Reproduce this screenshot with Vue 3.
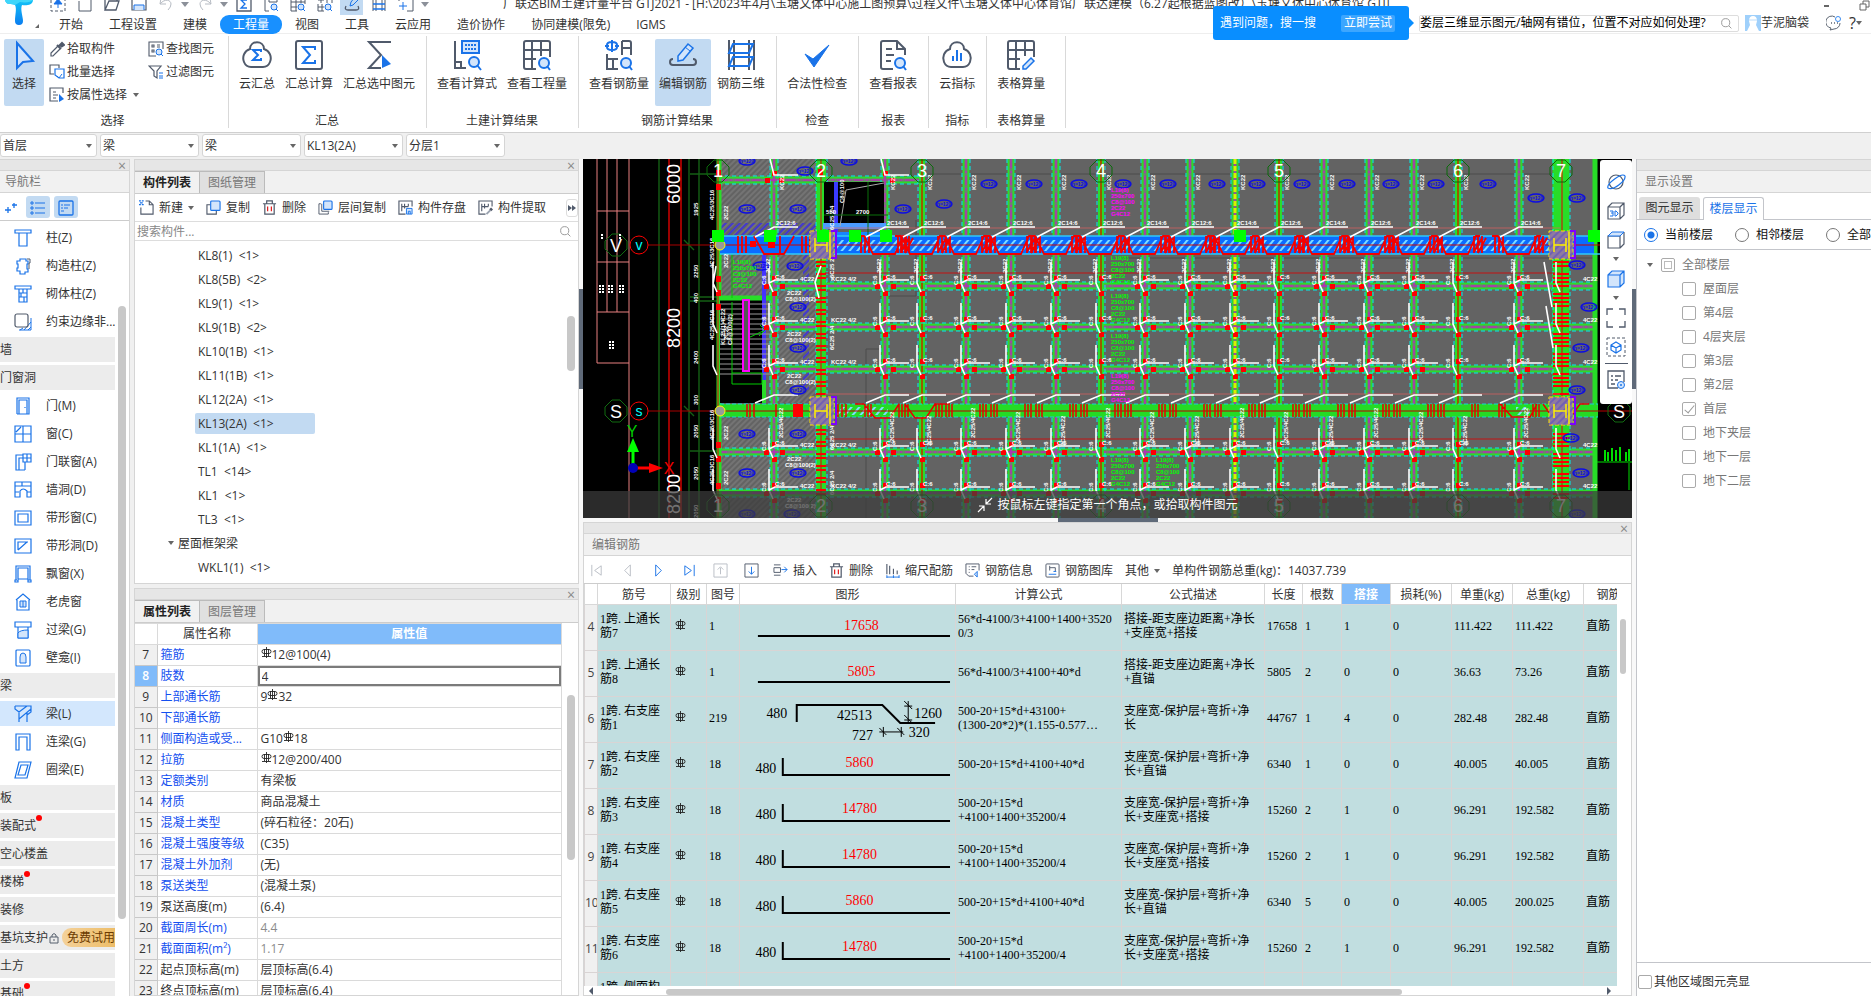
<template>
  <div class="app">
    <!-- TOP -->
    <header class="top">
      <svg class="logo" viewBox="0 0 34 26">
        <defs>
          <linearGradient id="logoFill" x1="0" y1="0" x2="0" y2="1">
            <stop offset="0" stop-color="#12c3f7" />
            <stop offset="1" stop-color="#0b7df0" />
          </linearGradient>
        </defs>
        <path d="M5 0H33C33 5 26 6 22 5C20 9 23 17 23 21A4 4 0 0 1 15 21C15 15 17 9 15 5C12 3 6 6 5 0Z" fill="url(#logoFill)" />
        <path d="M5 0H33C31 2 26 3 20 2L15 5C12 3 6 6 5 0Z" fill="#3fd6fa" />
      </svg>
      <div class="top-main">
        <div class="title-row">
          <div class="quick">
            <button v-for="(q, i) in quick" :key="i" :class="['quick-btn', { active: q === 'edit', caret: q === 'down' }]" :aria-label="q">
              <svg viewBox="0 0 16 16" v-html="icons[q]"></svg>
            </button>
          </div>
          <span class="app-title">{{ title }}</span>
          <div class="win">
            <svg viewBox="0 0 50 12"><path d="M3 6H8" stroke="#666" stroke-width="2" /><path d="M42 4V1H48V7H45M39 4H45V10H39Z" fill="none" stroke="#666" /></svg>
          </div>
        </div>
        <nav class="menu">
          <i class="corner"></i>
          <button v-for="m in menus" :key="m" :class="{ on: m === '工程量' }">{{ m }}</button>
        </nav>
      </div>
      <div class="help">
        <div class="tip">
          <span>遇到问题，搜一搜</span>
          <button>立即尝试</button>
        </div>
        <div class="ask">
          <input type="text" aria-label="搜索问题" value="娄层三维显示图元/轴网有错位，位置不对应如何处理?" />
          <svg viewBox="0 0 16 16" v-html="icons.search"></svg>
        </div>
        <svg class="avatar" viewBox="0 0 16 16"><rect width="16" height="16" fill="#9fd0fb" /><path d="M4 6Q4 1 8 1T12 6L11 10L14 16H2L5 10Z" fill="#fff" /><path d="M4 5H12" stroke="#b9dcfb" /></svg>
        <span class="user">芋泥脑袋</span>
        <svg class="chat" viewBox="0 0 16 16"><path d="M9 2A6 6 0 1 0 5 13L4 15L8 14A6 6 0 0 0 14 8" fill="none" stroke="#5d6673" /><circle cx="12" cy="4" r="2.5" fill="none" stroke="#3b8cf0" /><path d="M5 8h1M8 8h1M11 8h1" stroke="#5d6673" stroke-width="1.5" /></svg>
        <button class="question">?<i class="tri"></i></button>
      </div>
    </header>

    <!-- RIBBON -->
    <section class="ribbon">
      <div class="group pick">
        <div class="group-body">
          <button class="big active">
            <svg viewBox="0 0 32 32" v-html="icons.cursor"></svg>
            <span>选择</span>
          </button>
          <div class="smalls">
            <button v-for="s in smallLeft" :key="s.label"><svg viewBox="0 0 16 16" v-html="icons[s.icon]"></svg>{{ s.label }}<i v-if="s.drop" class="tri"></i></button>
          </div>
          <div class="smalls second">
            <button v-for="s in smallRight" :key="s.label"><svg viewBox="0 0 16 16" v-html="icons[s.icon]"></svg>{{ s.label }}</button>
          </div>
        </div>
        <div class="group-name">选择</div>
      </div>
      <div v-for="g in groups" :key="g.name" class="group">
        <div class="group-body">
          <button v-for="b in g.items" :key="b.label" :class="['big', { active: b.active }]">
            <svg viewBox="0 0 32 32" v-html="icons[b.icon]"></svg>
            <span>{{ b.label }}</span>
          </button>
        </div>
        <div class="group-name">{{ g.name }}</div>
      </div>
    </section>

    <!-- SELECTORS -->
    <section class="selectors">
      <div v-for="(s, i) in selectors" :key="i" class="select-box">
        <select :aria-label="'选择' + (i + 1)"><option>{{ s }}</option></select>
        <i class="tri"></i>
      </div>
    </section>

    <main class="body">
      <!-- NAVIGATION -->
      <aside class="nav">
        <div class="strip"><button aria-label="关闭导航栏">×</button></div>
        <h2 class="head">导航栏</h2>
        <div class="nav-tools">
          <button aria-label="展开"><svg viewBox="0 0 16 16" v-html="icons.plus2"></svg></button>
          <button class="on" aria-label="列表"><svg viewBox="0 0 16 16" v-html="icons.list"></svg></button>
          <button class="on" aria-label="卡片"><svg viewBox="0 0 16 16" v-html="icons.card"></svg></button>
        </div>
        <div class="nav-scroll">
          <div class="nav-list">
            <button v-for="n in navItems" :key="n.label" :class="[n.icon ? 'nav-item' : 'nav-cat', { on: n.on }]">
              <svg v-if="n.icon" viewBox="0 0 18 18" v-html="icons[n.icon]"></svg>
              <span :class="{ dot: n.dot }">{{ n.label }}</span>
              <template v-if="n.trial">
                <svg class="lock" viewBox="0 0 12 12"><path d="M2 5H10V11H2ZM4 5V3Q6 0 8 3V5M6 7V9" fill="none" stroke="#555f6d" /></svg>
                <em>免费试用</em>
              </template>
            </button>
          </div>
          <div class="bar nav-bar"></div>
        </div>
      </aside>

      <!-- COMPONENT AND PROPERTY LISTS -->
      <div class="lists">
        <section class="panel components">
          <div class="strip"><button aria-label="关闭构件列表">×</button></div>
          <div class="tabs"><button class="on">构件列表</button><button>图纸管理</button></div>
          <div class="tools">
            <button v-for="t in compTools" :key="t.label"><svg viewBox="0 0 16 16" v-html="icons[t.icon]"></svg>{{ t.label }}<i v-if="t.drop" class="tri"></i></button>
            <button class="more" aria-label="更多"><i></i><i></i></button>
          </div>
          <div class="search">
            <input type="text" aria-label="搜索构件" placeholder="搜索构件..." />
            <svg viewBox="0 0 16 16" v-html="icons.search"></svg>
          </div>
          <div class="comp-scroll">
            <ul>
              <li v-for="c in components" :key="c" :class="{ parent: c === '屋面框架梁', on: c === 'KL13(2A)  <1>' }">
                <i v-if="c === '屋面框架梁'" class="tri"></i><span>{{ c }}</span>
              </li>
            </ul>
            <div class="bar comp-bar"></div>
          </div>
        </section>

        <section class="panel props">
          <div class="strip"><button aria-label="关闭属性列表">×</button></div>
          <div class="tabs"><button class="on">属性列表</button><button>图层管理</button></div>
          <div class="props-scroll">
            <table>
              <colgroup><col class="c-no" /><col class="c-name" /><col /></colgroup>
              <thead><tr><th></th><th>属性名称</th><th class="hot">属性值</th></tr></thead>
              <tbody>
                <tr v-for="(p, i) in props" :key="p[0]" :class="{ cur: i === 1 }">
                  <td class="no">{{ i + 7 }}</td>
                  <td :class="['name', { plain: p[2] === 'plain' }]">{{ p[0] }}</td>
                  <td :class="['val', { faint: p[2] === 'faint' }]">
                    <input v-if="i === 1" type="text" :value="p[1]" aria-label="肢数" />
                    <template v-else v-for="(part, k) in p[1].split('#')" :key="k"><svg v-if="k" class="rebar" viewBox="0 0 11 11" v-html="icons.rebar"></svg>{{ part }}</template>
                  </td>
                </tr>
              </tbody>
            </table>
            <div class="bar props-bar"></div>
          </div>
        </section>
      </div>

      <div class="split"><i></i></div>

      <!-- DRAWING AND REBAR TABLE -->
      <div class="center">
        <div class="canvas">
          <svg class="cad" viewBox="583 159 1049 359" preserveAspectRatio="xMidYMid slice">
            <defs>
              <pattern id="hatch" width="4" height="4" patternUnits="userSpaceOnUse" patternTransform="rotate(45)"><path d="M1 0V4" stroke="#858585" /></pattern>
              <pattern id="purple" width="5" height="5" patternUnits="userSpaceOnUse" patternTransform="rotate(45)"><path d="M1 0V5" stroke="#4338d0" stroke-width="2" /></pattern>
              <pattern id="sky" width="6" height="6" patternUnits="userSpaceOnUse" patternTransform="rotate(40)"><path d="M2 0V6" stroke="#7fdcff" stroke-width="2" /></pattern>
            </defs>
            <rect x="583" y="159" width="1049" height="359" fill="#000" />
            <rect x="718" y="159" width="878" height="359" fill="#636363" />
            <rect x="720" y="159" width="100" height="76" fill="url(#hatch)" />
            <rect x="720" y="254" width="100" height="46" fill="url(#hatch)" />
            <rect x="772" y="300" width="48" height="103" fill="url(#hatch)" />
            <rect x="720" y="418" width="100" height="100" fill="url(#hatch)" />
            <rect x="720" y="223" width="100" height="12" fill="url(#purple)" />
            <rect x="803" y="240" width="6" height="150" fill="url(#purple)" />
            <path d="M922 174H1560M916 220V296H880M866 349V518M866 349H890M1120 258H1595" fill="none" stroke="#4c4c4c" stroke-width="1" />

            <!-- left frame and dimensions -->
            <path d="M597 159V363H629M607 159V312M617 159V312M597 211H629M597 262H629M597 312H629M629 159V518" fill="none" stroke="#e98080" />
            <path d="M659 159V518M689 159V518M699 159V518M690 174H718M690 297H718M690 301H718M690 451H718M684 240L694 250M684 406L694 416" fill="none" stroke="#145f14" stroke-width="1.4" />
            <path d="M669 159V518M681 159V518" stroke="#d00000" stroke-width="1.5" />
            <path d="M648 245H718M648 411H718" stroke="#a80000" />
            <path :d="bubble(616, 245) + bubble(616, 411)" fill="none" stroke="#116c11" />
            <text v-for="t in dims" :key="t.y" class="cad-dim" :transform="`translate(680 ${t.y}) rotate(-90)`">{{ t.v }}</text>
            <text v-for="t in smallDims" :key="t.y" class="tiny" :transform="`translate(698 ${t.y}) rotate(-90)`">{{ t.v }}</text>
            <text x="616" y="252" class="cad-axis">V</text>
            <text x="616" y="418" class="cad-axis">S</text>
            <g fill="none" stroke="#f00"><circle cx="639" cy="245" r="9" /><circle cx="639" cy="411" r="9" /></g>
            <text x="639" y="250" class="cad-sub">v</text>
            <text x="639" y="416" class="cad-sub">s</text>
            <path d="M600 285V293M603 285V293M609 285V293M612 285V293M620 285V293M623 285V293M610 341V349M613 341V349M602 234V240M620 234V240" stroke="#fff" stroke-width="2" stroke-dasharray="2 1" />

            <!-- secondary beams -->
            <path :d="minorLines" stroke="#2bdc2b" stroke-width="7" />
            <path :d="minorLines" stroke="#777" stroke-width="3" />
            <path :d="minorLines" stroke="#d012d0" stroke-width="1" stroke-dasharray="9 3 2 3" />
            <path :d="axisLines" stroke="#2bdc2b" stroke-width="6" />
            <path :d="axisLines" stroke="#9a5a00" stroke-width="2" />
            <path :d="edgeLines" stroke="#00f0f0" stroke-width="1" stroke-dasharray="4 3" />
            <path d="M1235 159V518" stroke="#d8f000" stroke-width="3" stroke-dasharray="5 2" />

            <!-- perimeter and main beams -->
            <path d="M719 159V518M1595 159V518" stroke="#28dd28" stroke-width="5" />
            <path d="M821 159V518" stroke="#28dd28" stroke-width="10" />
            <path d="M1561 159V518" stroke="#28dd28" stroke-width="17" />
            <path d="M816 159V518M827 159V518M1553 159V518M1570 159V518" stroke="#00f0f0" stroke-dasharray="4 3" />
            <path d="M821 159V518M1562 159V518M718 159V518" stroke="#e00000" />
            <path :d="axisTicks" stroke="#f00" stroke-width="2" />
            <rect x="824" y="182" width="60" height="44" fill="#000" />
            <path d="M836 182V235" stroke="#3a3aff" stroke-width="4" />
            <path d="M823 226H886" stroke="#4b9bff" stroke-width="6" />
            <path d="M823 237H886" stroke="#1786ff" stroke-width="10" />
            <path d="M840 226L846 190L884 183" fill="none" stroke="#aaa" />
            <path d="M824 215H888M868 182V235" stroke="#0b700b" />
            <rect x="720" y="300" width="43" height="103" fill="#000" />
            <path d="M719 298H772" stroke="#28dd28" stroke-width="5" />
            <path d="M764 255V382" stroke="#4433ff" stroke-width="4" />
            <path d="M764 380V403" stroke="#28dd28" stroke-width="4" />
            <path :d="stairs" stroke="#999" />
            <path d="M732 302V384H762M732 373H762V384M732 254V298M748 338L763 331M760 325L765 330L759 336" fill="none" stroke="#0c0" />
            <rect x="743" y="300" width="6" height="71" fill="#555" stroke="#f0f" stroke-width="2" />

            <rect x="720" y="236" width="874" height="18" fill="#0b6cff" />
            <path d="M720 236H1600M720 254H1600" stroke="#30c9f7" stroke-width="1.5" />
            <rect x="836" y="240" width="720" height="11" fill="url(#sky)" />
            <path d="M720 245H1600" stroke="#c00" />
            <rect x="720" y="404" width="878" height="13" fill="#25da25" />
            <path d="M720 404H1598M720 417H1598" stroke="#16d5d5" stroke-dasharray="4 2" />
            <rect x="836" y="407" width="52" height="8" fill="url(#sky)" />
            <rect x="1516" y="407" width="14" height="8" fill="url(#sky)" />
            <path d="M720 411H1632" stroke="#b00" />
            <path d="M825 273H1560M825 439H1560" stroke="#c51212" />
            <path d="M825 228H1560M825 394H1560" stroke="#e06060" stroke-width=".7" />

            <path :d="stirrups" fill="none" stroke="#f40000" stroke-width="1.8" />
            <path :d="lowStirrups" fill="none" stroke="#e80000" stroke-width="1.5" />
            <path :d="nodes" fill="#f00" />
            <path :d="leaders" fill="none" stroke="#fff" stroke-width="1.6" />

            <g v-for="e in ellipses" :key="e.join()">
              <ellipse :cx="e[0]" :cy="e[1]" rx="8" ry="4" fill="none" stroke="#0c0ce6" stroke-width="1.4" />
              <text :x="e[0]" :y="e[1] + 2" class="mark">h=120</text>
            </g>

            <g class="tiny">
              <text v-for="(t, i) in tinyText" :key="i" :transform="`translate(${t.x} ${t.y}) rotate(${t.r})`">{{ t.v }}</text>
            </g>
            <g class="note">
              <text v-for="(t, i) in notes" :key="i" :x="t.x" :y="t.y" :fill="t.c">{{ t.v }}</text>
            </g>

            <!-- columns -->
            <g v-for="c in columns" :key="c.join()">
              <rect :x="c[0] - 11" :y="c[1] - 14" width="24" height="28" fill="#8f7aa0" stroke="#ffe600" stroke-dasharray="4 2" />
              <rect :x="c[0] - 11" :y="c[1] - 14" width="24" height="28" fill="url(#purple)" opacity=".4" />
              <path :d="`M${c[0] + 10} ${c[1] - 14}h5v27h-5`" fill="none" stroke="#7d00ff" stroke-width="2" />
              <path :d="`M${c[0] - 6} ${c[1] - 7}v14M${c[0] + 6} ${c[1] - 7}v14M${c[0] - 6} ${c[1]}h12M${c[0] + 9} ${c[1] - 13}v26`" stroke="#fff000" stroke-width="1.5" />
            </g>
            <circle cx="720" cy="245" r="5" fill="#999" stroke="#ff0" />
            <circle cx="720" cy="411" r="5" fill="#999" stroke="#ff0" />
            <rect v-for="x in grips" :key="x" :x="x - 6" y="230" width="12" height="12" fill="#00ff00" />

            <!-- grid bubbles -->
            <g v-for="(x, i) in bubbles" :key="x">
              <path :d="bubble(x, 171) + bubble(x, 506)" fill="none" stroke="#0b6b0b" />
              <text :x="x" y="177" class="cad-axis">{{ i + 1 }}</text>
              <text :x="x" y="512" class="cad-axis">{{ i + 1 }}</text>
            </g>

            <path :d="bubble(1619, 411)" fill="none" stroke="#116c11" />
            <text x="1619" y="418" class="cad-axis">S</text>
            <path d="M1597 462H1632M1629 463V490" stroke="#0d0" />
            <path d="M1605 450V461M1608 452V461M1612 448V461M1616 450V461M1620 447V461M1626 452V461M1629 449V461" stroke="#0d0" stroke-width="2" />

            <path d="M633 468V450" stroke="#0f0" stroke-width="3" /><path d="M633 438L627 452H639Z" fill="#0f0" />
            <path d="M633 468H650" stroke="#f00" stroke-width="3" /><path d="M663 468L649 463V473Z" fill="#f00" />
            <circle cx="633" cy="468" r="5" fill="#0000b8" />
            <text x="632" y="437" class="ucs" fill="#0c0">Y</text>
            <text x="669" y="474" class="ucs" fill="#e00">X</text>
          </svg>
          <div class="hint">
            <svg viewBox="0 0 16 16"><path d="M1 15L7 9M2 9H7V14M15 1L9 7M9 2V7H14" fill="none" stroke="#fff" stroke-width="1.2" /></svg>
            按鼠标左键指定第一个角点，或拾取构件图元
          </div>
          <div class="view-tools">
            <template v-for="(v, i) in viewTools" :key="i">
              <i v-if="v === 'tri'" class="tri"></i>
              <hr v-else-if="v === 'line'" />
              <button v-else :aria-label="v"><svg viewBox="0 0 20 20" v-html="icons[v]"></svg></button>
            </template>
          </div>
        </div>

        <div class="hsplit"><i></i></div>

        <section class="panel rebar-panel">
          <div class="strip"><button aria-label="关闭编辑钢筋">×</button></div>
          <h2 class="head">编辑钢筋</h2>
          <div class="rebar-tools">
            <button v-for="t in steps" :key="t" class="step" :aria-label="t"><svg viewBox="0 0 16 16" v-html="icons[t]"></svg></button>
            <button v-for="t in rebarTools" :key="t.label"><svg viewBox="0 0 16 16" v-html="icons[t.icon]"></svg>{{ t.label }}</button>
            <button>其他<i class="tri"></i></button>
            <span class="weight">单构件钢筋总重(kg)：14037.739</span>
          </div>
          <div class="grid-area">
            <div class="grid-scroll">
              <table>
                <colgroup><col v-for="(w, i) in widths" :key="i" :style="{ width: w + 'px' }" /></colgroup>
                <thead>
                  <tr><th v-for="h in heads" :key="h" :class="{ hot: h === '搭接' }">{{ h }}</th></tr>
                </thead>
                <tbody>
                  <tr v-for="(r, i) in rows" :key="i">
                    <td class="no">{{ r.shape ? i + 4 : '' }}</td>
                    <td>{{ r.name[0] }}<br />{{ r.name[1] }}</td>
                    <td class="grade"><svg v-if="r.shape" class="rebar" viewBox="0 0 11 11" v-html="icons.rebar"></svg></td>
                    <td>{{ r.no }}</td>
                    <td class="figure">
                      <svg v-if="r.shape" viewBox="0 0 216 45">
                        <template v-if="r.shape === 'line'">
                          <path d="M18 31H211" class="bar-line" />
                          <text x="122" y="25" class="red">{{ r.len }}</text>
                        </template>
                        <template v-else-if="r.shape === 'hook'">
                          <path d="M43 15V32H211" class="bar-line" />
                          <text x="26" y="30">480</text>
                          <text x="120" y="24" class="red">{{ r.len }}</text>
                        </template>
                        <template v-else>
                          <path d="M57 25V8H143L161 26H196" class="bar-line" />
                          <path d="M169 4V26M165 4L173 12M165 18L173 26M165 9H173M165 23H173M140 35H164M140 31L147 38M158 31L165 38M144 30V40M162 30V40" fill="none" stroke="#000" />
                          <text x="37" y="21">480</text><text x="115" y="23">42513</text>
                          <text x="189" y="21">1260</text><text x="123" y="43">727</text><text x="180" y="40">320</text>
                        </template>
                      </svg>
                    </td>
                    <td v-for="(c, k) in r.cells" :key="k"><template v-for="(l, n) in c.split('|')" :key="n"><br v-if="n" />{{ l }}</template></td>
                  </tr>
                </tbody>
              </table>
            </div>
            <div class="grid-bar"><div class="bar"></div></div>
          </div>
          <div class="h-bar"><i class="left"></i><div class="bar"></div><i class="right"></i></div>
        </section>
      </div>

      <div class="split"><i></i></div>

      <!-- DISPLAY SETTINGS -->
      <aside class="display">
        <div class="strip"></div>
        <h2 class="head">显示设置</h2>
        <div class="d-tabs"><button>图元显示</button><button class="on">楼层显示</button></div>
        <div class="radios">
          <label v-for="(r, i) in ['当前楼层', '相邻楼层', '全部楼层']" :key="r"><input type="radio" name="floor" :checked="i === 0" />{{ r }}</label>
        </div>
        <div class="tree">
          <label class="root"><i class="tri"></i><input type="checkbox" class="mixed" />全部楼层</label>
          <label v-for="f in floors" :key="f"><input type="checkbox" :checked="f === '首层'" />{{ f }}</label>
        </div>
        <label class="foot"><input type="checkbox" />其他区域图元亮显</label>
      </aside>
    </main>
  </div>
</template>

<script setup>
const title = '广联达BIM土建计量平台 GTJ2021 - [H:\\2023年4月\\玉塘文体中心施工图预算\\过程文件\\玉塘文体中心体育馆广联达建模（6.27起根据蓝图改）\\玉塘文体中心体育馆.GTJ]'
const quick = ['import', 'new', 'open', 'save', 'undo', 'down', 'redo', 'down', 'sum', 'formula', 'gridq', 'rebarq', 'edit', 'three', 'pick', 'down']
const menus = ['开始', '工程设置', '建模', '工程量', '视图', '工具', '云应用', '造价协作', '协同建模(限免)', 'IGMS']
const selectors = ['首层', '梁', '梁', 'KL13(2A)', '分层1']

/* ICONS: blue and slate strokes */
const B = 'fill="none" stroke="#1a73e8"'
const G = 'fill="none" stroke="#505a6b"'
const L = 'fill="#d3e5fb" stroke="#1a73e8"'
const trash = `<path d="M1 4H15M5 4V1H11V4M3 4V15H13V4" ${G} stroke-width="1.3"/><path d="M6 7V12M10 7V12" stroke="#e02020" stroke-width="1.3"/>`
const cloud = 'M9 10C9 1 23 1 23 10C29 12 31 18 29 23Q27 28 22 28H10Q5 28 3 23C1 18 3 12 9 10Z'
const grid = 'M5 2H27Q29 2 29 4V18M5 2Q3 2 3 4V28Q3 30 5 30H15M3 11H29M3 20H15M11 2V30M20 2V17'
const icons = {
  import: `<path d="M1 1H15V15H1Z" ${G} stroke-dasharray="3 2"/><path d="M8 12V5M4 8L8 3L12 8Z" fill="#1a73e8" stroke="#1a73e8"/>`,
  new: `<path d="M2 5V15H14V2H5" ${G}/><path d="M1 2H4" stroke="#1a73e8"/>`,
  open: `<path d="M1 14V2H13V5M1 14H12L15 5H5Z" ${G} stroke-width="1.3"/>`,
  save: `<path d="M1 2H15V14H1Z" ${G} stroke-width="1.2"/><path d="M3 14V9H13V14" ${L}/>`,
  undo: '<path d="M3 2L2 8H8M2 8C7 2 13 4 13 8Q13 11 10 14" fill="none" stroke="#b6bbc3"/>',
  redo: '<path d="M13 2L14 8H8M14 8C9 2 3 4 3 8Q3 11 6 14" fill="none" stroke="#b6bbc3"/>',
  down: '<path d="M4 6H12L8 11Z" fill="#8b9099"/>',
  sum: `<path d="M1 1H15V15H1Z" ${G} stroke-width="1.3"/><path d="M11 4H5L9 8L5 12H11" ${B} stroke-width="1.3"/>`,
  formula: `<path d="M2 1V15H6M6 1H14V6H6Z" ${G}/><circle cx="11" cy="11" r="3" ${L}/><path d="M13 13L15 15" ${B}/>`,
  gridq: `<path d="M1 1H15V8M1 1V15H7M1 6H15M1 11H7M6 1V15M11 1V7" ${G}/><circle cx="11" cy="11" r="3" ${L}/><path d="M13 13L15 15" ${B}/>`,
  rebarq: `<path d="M10 1H15V7M10 1V7M1 8V15H7M1 11H7M5 8V15M1 4H7M4 1V7" ${G}/><circle cx="11" cy="11" r="3" ${L}/><path d="M13 13L15 15" ${B}/>`,
  edit: `<path d="M2 10Q0 14 4 14H12Q16 14 14 10" ${G} stroke-width="1.3"/><path d="M6 10L7 6L11 1L14 4L9 9Z" ${B}/>`,
  three: `<path d="M2 1V15M5 1V15M11 1V15M14 1V15" ${G}/><path d="M2 3H14M2 8H14M2 13H14" ${B} stroke-width="1.5"/>`,
  pick: `<path d="M9 2H15V15H9M1 5V2H5" ${G}/><path d="M5 6V14M1 10H9" ${B}/>`,
  search: '<circle cx="7" cy="7" r="5" fill="none" stroke="#999" stroke-width="1.2"/><path d="M11 11L14 14" stroke="#999" stroke-width="1.2"/>',
  cursor: '<path d="M9 4V29L15 23L25 22Z" fill="#d3e5fb" stroke="#1a73e8" stroke-width="2"/>',
  dropper: `<path d="M9 5L2 12V15H4L11 8" ${G} stroke-width="1.2"/><path d="M8 4L12 8M10 5L13 2L15 4L12 6" fill="#505a6b" stroke="#505a6b" stroke-width="2"/>`,
  batch: `<path d="M5 10H1V1H10V4" ${G} stroke-width="1.2"/><path d="M6 5H15V14H10L6 11Z" fill="#fff" stroke="#1a73e8" stroke-width="1.2"/><path d="M8 12L10 14L13 10" ${B}/>`,
  attr: `<path d="M9 14H1V1H14V6M4 5H7M4 8H9M4 11H7" ${G} stroke-width="1.2"/><path d="M10 7V15L15 12Z" fill="#1a73e8"/>`,
  find: `<path d="M8 15H1V1H15V8M4 4H6V6H4ZM4 9H6V11H4ZM9 4H12M9 6H12" ${G} stroke-width="1.1"/><circle cx="11" cy="11" r="3" ${L}/><path d="M13 13L15 15" ${B}/>`,
  filter: `<path d="M1 2H13L9 7V14L6 12V7Z" ${G} stroke-width="1.2"/><path d="M11 9H15M11 12H15M11 14H15" ${B}/>`,
  cloudSum: `<path d="${cloud}" ${G} stroke-width="2"/><path d="M20 13V11H12L17 16L12 21H20V19" ${B} stroke-width="2"/>`,
  bigSum: `<rect x="3" y="2" width="26" height="28" rx="2" ${G} stroke-width="2"/><path d="M22 11V8H10L17 16L10 24H22V21" ${B} stroke-width="2"/>`,
  pickSum: `<path d="M28 3H6L18 16L6 29H18" ${G} stroke-width="2"/><path d="M19 16V29L28 25Z" fill="#1a73e8"/>`,
  bigFormula: `<path d="M4 2V29H15M4 23H10V29" ${G} stroke-width="2"/><path d="M11 2H28V14H11Z" ${L} stroke-width="2"/><path d="M14 6H26M14 10H26" stroke="#1a73e8" stroke-width="2" stroke-dasharray="2 1"/><circle cx="23" cy="23" r="5" ${L} stroke-width="2"/><path d="M26 26L30 31" ${B} stroke-width="2"/>`,
  bigGrid: `<path d="${grid}" ${G} stroke-width="2"/><circle cx="23" cy="24" r="5" ${L} stroke-width="2"/><path d="M26 27L29 31" ${B} stroke-width="2"/>`,
  bigRebar: `<path d="M19 2H26Q28 2 28 4V16M19 2V16M19 9H28M4 15V30H15M4 20H15M10 20V30" ${G} stroke-width="2"/><path d="M9 1V13M4 6C4 2 14 2 14 6M4 8C4 12 14 12 14 8M2 7H6M12 7H16" ${B} stroke-width="2"/><circle cx="23" cy="24" r="5" ${L} stroke-width="2"/><path d="M26 27L29 31" ${B} stroke-width="2"/>`,
  bigEdit: `<path d="M6 20C2 20 2 26 6 26H26C30 26 30 20 26 20" ${G} stroke-width="2"/><path d="M11 22V17L21 5L26 9L16 21Z" ${L} stroke-width="1.5"/><path d="M18 8L23 12" ${B}/>`,
  bigThree: `<path d="M4 1V31M9 1V31M24 1V31M29 1V31" ${G} stroke-width="2"/><path d="M8 5H28L24 14H4ZM8 18H28L24 27H4Z" ${B} stroke-width="2"/>`,
  check: '<path d="M4 15L12 20L28 6L13 28Z" fill="#1a73e8" stroke="#1a73e8" stroke-linejoin="round"/>',
  report: `<path d="M16 30H6Q4 30 4 28V4Q4 2 6 2H20L28 10V16M20 2V10H28M9 10H15M9 16H17M9 22H14" ${G} stroke-width="2"/><circle cx="23" cy="24" r="5" ${L} stroke-width="2"/><path d="M26 27L29 31" ${B} stroke-width="2"/>`,
  cloudBar: `<path d="${cloud}" ${G} stroke-width="2"/><path d="M12 17V22M16 11V22M20 14V22" ${B} stroke-width="2"/>`,
  gridEdit: `<path d="${grid}" ${G} stroke-width="2"/><path d="M18 30V27L26 19L29 22L21 30Z" ${L} stroke-width="1.5"/>`,
  plus2: `<path d="M5 7V13M2 10H8M11 3V8M9 5H14" ${B} stroke-width="1.3"/>`,
  list: `<path d="M1 2H3V4H1ZM1 7H3V9H1ZM1 12H3V14H1ZM5 3H15M5 8H15M5 13H15" ${B}/>`,
  card: `<rect x="1" y="1" width="14" height="14" rx="1" ${B} stroke-width="1.3"/><path d="M3 5H5M6 5H12M3 8H5M6 8H10M3 11H6" ${B}/>`,
  create: `<path d="M7 1H11L15 5V15H2V8M11 1V5H15" ${G} stroke-width="1.2"/><path d="M0 1H2M3 1H5M1 3H4M0 5H2M3 5H5" stroke="#1a73e8" stroke-width="1.4"/>`,
  copy: `<path d="M5 5H1V15H11V11" ${G} stroke-width="1.2"/><rect x="5" y="1" width="10" height="10" rx="1" ${L} stroke-width="1.2"/>`,
  trash,
  floorCopy: `<path d="M3 4H1V15H11V13M4 4V12H12" ${G}/><rect x="6" y="1" width="9" height="9" rx="1" ${L} stroke-width="1.2"/>`,
  store: `<path d="M8 15H1V1H15V7M4 4V12M7 4V9M4 7H11M11 4V7" ${G} stroke-width="1.2"/><path d="M9 9H15V15H9ZM11 15V12H13V15" ${L}/>`,
  extract: `<path d="M8 15H1V1H15V7M4 4V12M7 4V9M4 7H11M11 4V7" ${G} stroke-width="1.2"/><path d="M9 15L13 11" stroke="#9aa3b0" stroke-width="2"/><path d="M13 11L15 9" stroke="#505a6b" stroke-width="3"/>`,
  rebar: '<path d="M5.5 0V11M3 2.5H8Q10 2.5 10 4.5T8 6.5H3Q1 6.5 1 4.5T3 2.5M1 9.5H10M3.5 2V9M7.5 2V9" fill="none" stroke="#222" stroke-width=".9"/>',
  first: '<path d="M3 2V14M13 3L6 8L13 13Z" fill="none" stroke="#b9bdc4"/>',
  prev: '<path d="M11 2L5 8L11 14Z" fill="none" stroke="#b9bdc4"/>',
  next: `<path d="M5 2L11 8L5 14Z" ${B}/>`,
  last: `<path d="M13 2V14M3 3L10 8L3 13Z" ${B}/>`,
  up: '<path d="M1 1H15V15H1ZM8 12V5M5 7L8 4L11 7" fill="none" stroke="#b9bdc4"/>',
  dn: `<path d="M1 1H15V15H1Z" ${G}/><path d="M8 4V12M5 9L8 12L11 9" ${B}/>`,
  insert: `<path d="M1 2H8M1 5H8V10H1ZM1 13H8" ${G}/><path d="M9 7H15M12 4L15 7L12 10" ${B}/>`,
  scale: `<path d="M2 1V12M5 3V12M9 6V12M13 8V12" ${G} stroke-width="1.2"/><path d="M2 15H15M2 13V16M9 13V16M15 13V16" ${B}/>`,
  info: `<path d="M9 14H4L1 11V1H15V8M4 4H5M7 4H12M4 7H5M7 7H10M4 10H5" ${G}/><path d="M10 12L13 9V15Z" ${L}/>`,
  lib: `<rect x="1" y="1" width="14" height="14" rx="1" ${G}/><path d="M5 3V8M5 5H11V9" ${G}/><path d="M4 12H12M9 9H12" ${B}/>`,
  pillar: `<path d="M1 1H17V4H1ZM5 4H13V17H5Z" ${B} stroke-width="1.2"/>`,
  cross: `<path d="M6 4V2H12V4H14V7H13V12H14V15H11V17H6V14H3V11H4V7H3V4Z" ${B} stroke-width="1.2"/><path d="M13 2H16V6H15V12" ${G}/>`,
  brick: `<path d="M1 1H17V4H1ZM5 4H13V17H5ZM5 8H13M5 12H13M9 4V8M7 8V12M10 12V17" ${B} stroke-width="1.2"/>`,
  edge: `<path d="M5 17H17V5M14 17L17 14M10 17L17 9M6 17L9 15" ${B}/><rect x="1" y="1" width="13" height="13" rx="2" fill="#fff" stroke="#505a6b" stroke-width="1.2"/>`,
  door: `<path d="M3 17V1H15V17H3M5 17V3H13V17M11 10V11" ${B} stroke-width="1.2"/>`,
  window: `<path d="M1 1H17V17H1ZM9 1V17M1 9H17M2 7L7 2" ${B} stroke-width="1.2"/>`,
  doorwin: `<path d="M11 17H2V2H9M5 17V5H9M11 17V9M9 1H17V9H9ZM13 1V9M9 5H17" ${B} stroke-width="1.2"/>`,
  hole: `<path d="M1 1H17V16H13V10Q9 6 6 10V16H1ZM1 5H17M8 1V5M1 11H5M13 11H17" ${B} stroke-width="1.2"/>`,
  strip: `<path d="M1 2H17V16H1ZM4 5H14V13H4Z" ${B} stroke-width="1.2"/>`,
  striphole: `<path d="M1 2H17V16H1ZM4 13V5H14M4 13L13 5" ${B} stroke-width="1.2"/>`,
  bay: `<path d="M2 15V1H16V15M4 14V3H14V14H4M1 15H4V17H1ZM14 15H17V17H14Z" ${B} stroke-width="1.2"/>`,
  dormer: `<path d="M2 7L9 1L16 7M3 7V17H15V7" ${B} stroke-width="1.2"/><path d="M6 8H12V14H6ZM9 8V14" ${L}/>`,
  lintel: `<path d="M1 1H17V6H1ZM4 6H14V17H4Z" ${B} stroke-width="1.2"/><path d="M4 12Q6 9 14 9V17H4Z" ${L}/>`,
  niche: `<rect x="2" y="1" width="14" height="16" rx="1" ${B} stroke-width="1.2"/><path d="M6 14V8Q6 4 9 4T12 8V14Z" ${L}/>`,
  beam: `<path d="M1 1H17V4L5 14V17M1 1V4L5 7L13 1M5 7V14M13 7V17M17 4V7L13 10" ${B} stroke-width="1.2"/>`,
  link: `<path d="M2 17V1H16V17H13V4H5V17Z" ${B} stroke-width="1.2"/>`,
  ring: `<path d="M5 1H17L13 17H1ZM7 4H14L11 14H4Z" ${B} stroke-width="1.2"/>`,
  orbit: `<circle cx="10" cy="10" r="7" ${G} stroke-width="1.2"/><path d="M2 16C0 12 16 0 19 4C20 9 7 19 2 16Z" ${B} stroke-width="1.2"/>`,
  cube3d: `<path d="M2 6L6 2H18V14L14 18H2ZM2 6H14V18M14 6L18 2" ${G} stroke-width="1.2"/><path d="M4 10H7V15H4M5 12H7M9 10H10L12 12V13L10 15H9Z" ${B}/>`,
  cubeTop: `<path d="M2 6H14V18H2ZM14 18L18 14V2" ${G} stroke-width="1.2"/><path d="M2 6L6 2H18L14 6Z" ${L}/>`,
  cubeFull: `<path d="M2 6L6 2H18V14L14 18H2ZM2 6H14V18M14 6L18 2" ${L} stroke-width="1.2"/>`,
  frame: `<path d="M1 7V1H7M13 1H19V7M19 13V19H13M7 19H1V13" ${G} stroke-width="1.3"/>`,
  isolate: `<rect x="1" y="1" width="18" height="18" ${G} stroke-dasharray="3 2"/><path d="M10 5L15 8V13L10 16L5 13V8ZM5 8L10 11L15 8M10 11V16" ${B} stroke-width="1.2"/>`,
  viewset: `<path d="M12 18H2V1H18V12M5 6H7M9 6H15M5 10H7M9 10H12M5 14H9" ${G} stroke-width="1.3"/><circle cx="15" cy="15" r="3.5" ${L}/><circle cx="15" cy="15" r="1" fill="#1a73e8"/>`
}

const smallLeft = [
  { icon: 'dropper', label: '拾取构件' },
  { icon: 'batch', label: '批量选择' },
  { icon: 'attr', label: '按属性选择', drop: true }
]
const smallRight = [
  { icon: 'find', label: '查找图元' },
  { icon: 'filter', label: '过滤图元' }
]
const groups = [
  { name: '汇总', items: [{ icon: 'cloudSum', label: '云汇总' }, { icon: 'bigSum', label: '汇总计算' }, { icon: 'pickSum', label: '汇总选中图元' }] },
  { name: '土建计算结果', items: [{ icon: 'bigFormula', label: '查看计算式' }, { icon: 'bigGrid', label: '查看工程量' }] },
  { name: '钢筋计算结果', items: [{ icon: 'bigRebar', label: '查看钢筋量' }, { icon: 'bigEdit', label: '编辑钢筋', active: true }, { icon: 'bigThree', label: '钢筋三维' }] },
  { name: '检查', items: [{ icon: 'check', label: '合法性检查' }] },
  { name: '报表', items: [{ icon: 'report', label: '查看报表' }] },
  { name: '指标', items: [{ icon: 'cloudBar', label: '云指标' }] },
  { name: '表格算量', items: [{ icon: 'gridEdit', label: '表格算量' }] }
]

const navItems = [
  { icon: 'pillar', label: '柱(Z)' },
  { icon: 'cross', label: '构造柱(Z)' },
  { icon: 'brick', label: '砌体柱(Z)' },
  { icon: 'edge', label: '约束边缘非...' },
  { label: '墙' },
  { label: '门窗洞' },
  { icon: 'door', label: '门(M)' },
  { icon: 'window', label: '窗(C)' },
  { icon: 'doorwin', label: '门联窗(A)' },
  { icon: 'hole', label: '墙洞(D)' },
  { icon: 'strip', label: '带形窗(C)' },
  { icon: 'striphole', label: '带形洞(D)' },
  { icon: 'bay', label: '飘窗(X)' },
  { icon: 'dormer', label: '老虎窗' },
  { icon: 'lintel', label: '过梁(G)' },
  { icon: 'niche', label: '壁龛(I)' },
  { label: '梁' },
  { icon: 'beam', label: '梁(L)', on: true },
  { icon: 'link', label: '连梁(G)' },
  { icon: 'ring', label: '圈梁(E)' },
  { label: '板' },
  { label: '装配式', dot: true },
  { label: '空心楼盖' },
  { label: '楼梯', dot: true },
  { label: '装修' },
  { label: '基坑支护', trial: true },
  { label: '土方' },
  { label: '基础', dot: true }
]

const compTools = [
  { icon: 'create', label: '新建', drop: true },
  { icon: 'copy', label: '复制' },
  { icon: 'trash', label: '删除' },
  { icon: 'floorCopy', label: '层间复制' },
  { icon: 'store', label: '构件存盘' },
  { icon: 'extract', label: '构件提取' }
]
const components = [
  'KL8(1)  <1>', 'KL8(5B)  <2>', 'KL9(1)  <1>', 'KL9(1B)  <2>', 'KL10(1B)  <1>', 'KL11(1B)  <1>', 'KL12(2A)  <1>',
  'KL13(2A)  <1>', 'KL1(1A)  <1>', 'TL1  <14>', 'KL1  <1>', 'TL3  <1>', '屋面框架梁', 'WKL1(1)  <1>'
]

// '#' stands for the rebar grade sign
const props = [
  ['箍筋', '#12@100(4)'],
  ['肢数', '4'],
  ['上部通长筋', '9#32'],
  ['下部通长筋', ''],
  ['侧面构造或受...', 'G10#18'],
  ['拉筋', '#12@200/400'],
  ['定额类别', '有梁板'],
  ['材质', '商品混凝土'],
  ['混凝土类型', '(碎石粒径：20石)'],
  ['混凝土强度等级', '(C35)'],
  ['混凝土外加剂', '(无)'],
  ['泵送类型', '(混凝土泵)'],
  ['泵送高度(m)', '(6.4)', 'plain'],
  ['截面周长(m)', '4.4', 'faint'],
  ['截面面积(m²)', '1.17', 'faint'],
  ['起点顶标高(m)', '层顶标高(6.4)', 'plain'],
  ['终点顶标高(m)', '层顶标高(6.4)', 'plain']
]

const viewTools = ['orbit', 'cube3d', 'cubeTop', 'tri', 'cubeFull', 'tri', 'frame', 'isolate', 'line', 'viewset']
const steps = ['first', 'prev', 'next', 'last', 'up', 'dn']
const rebarTools = [
  { icon: 'insert', label: '插入' },
  { icon: 'trash', label: '删除' },
  { icon: 'scale', label: '缩尺配筋' },
  { icon: 'info', label: '钢筋信息' },
  { icon: 'lib', label: '钢筋图库' }
]
const widths = [13, 73, 36, 33, 216, 166, 143, 38, 39, 49, 61, 61, 71, 50]
const heads = ['', '筋号', '级别', '图号', '图形', '计算公式', '公式描述', '长度', '根数', '搭接', '损耗(%)', '单重(kg)', '总重(kg)', '钢筋']
const long = '500-20+15*d|+4100+1400+35200/4'
const short = '500-20+15*d+4100+40*d'
const lap = '支座宽-保护层+弯折+净|长+支座宽+搭接'
const anchor = '支座宽-保护层+弯折+净|长+直锚'
const rows = [
  { name: ['1跨. 上通长', '筋7'], no: '1', shape: 'line', len: '17658', cells: ['56*d-4100/3+4100+1400+3520|0/3', '搭接-距支座边距离+净长|+支座宽+搭接', '17658', '1', '1', '0', '111.422', '111.422', '直筋'] },
  { name: ['1跨. 上通长', '筋8'], no: '1', shape: 'line', len: '5805', cells: ['56*d-4100/3+4100+40*d', '搭接-距支座边距离+净长|+直锚', '5805', '2', '0', '0', '36.63', '73.26', '直筋'] },
  { name: ['1跨. 右支座', '筋1'], no: '219', shape: 'bent', cells: ['500-20+15*d+43100+|(1300-20*2)*(1.155-0.577…', '支座宽-保护层+弯折+净|长', '44767', '1', '4', '0', '282.48', '282.48', '直筋'] },
  { name: ['1跨. 右支座', '筋2'], no: '18', shape: 'hook', len: '5860', cells: [short, anchor, '6340', '1', '0', '0', '40.005', '40.005', '直筋'] },
  { name: ['1跨. 右支座', '筋3'], no: '18', shape: 'hook', len: '14780', cells: [long, lap, '15260', '2', '1', '0', '96.291', '192.582', '直筋'] },
  { name: ['1跨. 右支座', '筋4'], no: '18', shape: 'hook', len: '14780', cells: [long, lap, '15260', '2', '1', '0', '96.291', '192.582', '直筋'] },
  { name: ['1跨. 右支座', '筋5'], no: '18', shape: 'hook', len: '5860', cells: [short, anchor, '6340', '5', '0', '0', '40.005', '200.025', '直筋'] },
  { name: ['1跨. 右支座', '筋6'], no: '18', shape: 'hook', len: '14780', cells: [long, lap, '15260', '2', '1', '0', '96.291', '192.582', '直筋'] },
  { name: ['1跨. 侧面构', '造筋1'], no: '', shape: '', cells: ['', '', '', '', '', '', '', '', ''] }
]
const floors = ['屋面层', '第4层', '4层夹层', '第3层', '第2层', '首层', '地下夹层', '地下一层', '地下二层']

/* DRAWING */
const minorX = [774, 885, 966, 1011, 1056, 1145, 1190, 1235, 1324, 1369, 1414, 1519]
const axisX = [922, 1101, 1279, 1458]
const beamY = [286, 327, 369, 452, 493]
const allX = [...minorX, ...axisX].sort((a, b) => a - b)
const bubbles = [718, 821, 922, 1101, 1279, 1458, 1561]
const grips = [718, 770, 823, 855, 886, 1240, 1594]
const columns = [[821, 245], [821, 411], [1560, 245], [1560, 411]]
const dims = [{ v: '6000', y: 204 }, { v: '8200', y: 348 }, { v: '8200', y: 514 }]
const smallDims = [{ v: '1925', y: 216 }, { v: '2250', y: 278 }, { v: '400', y: 303 }, { v: '2400', y: 364 }, { v: '300', y: 405 }, { v: '2050', y: 438 }, { v: '2050', y: 480 }, { v: '2050', y: 518 }]

const startX = y => (y > 255 && y < 400 ? 774 : 718)
const minorLines = minorX.map(x => `M${x} 159V518`).join('') + beamY.map(y => `M${startX(y)} ${y}H1595`).join('') + 'M718 180H922'
const axisLines = axisX.map(x => `M${x} 159V518`).join('')
const edgeLines = allX.map(x => `M${x - 4} 159V518M${x + 4} 159V518`).join('') +
  [180, ...beamY].map(y => `M${startX(y)} ${y - 4}H${y === 180 ? 922 : 1595}M${startX(y)} ${y + 4}H${y === 180 ? 922 : 1595}`).join('')

function bubble(x, y) {
  return `M${x - 4} ${y - 11}H${x + 4}L${x + 11} ${y - 4}V${y + 4}L${x + 4} ${y + 11}H${x - 4}L${x - 11} ${y + 4}V${y - 4}Z`
}

const stairs = Array.from({ length: 15 }, (_, i) => `M720 ${304 + i * 5}H772`).join('')

let axisTicks = ''
for (let y = 262; y < 500; y += 4) {
  if (y > 395 && y < 428) continue
  if (y % 3) axisTicks += `M816 ${y}h10`
  if (y % 5) axisTicks += `M1553 ${y}h16`
}

let nodes = ''
for (const x of allX) {
  for (const y of beamY) {
    nodes += `M${x - 2} ${y - 10}h5v5h-5ZM${x - 2} ${y + 5}h5v5h-5Z`
    if (minorX.includes(x)) nodes += `M${x - 10} ${y - 2}h5v5h-5ZM${x + 6} ${y - 2}h5v5h-5Z`
  }
}
for (const y of [180, 286, 300, 452, 493]) nodes += `M716 ${y - 10}h5v6h-5ZM716 ${y + 4}h5v6h-5Z`
nodes += 'M772 171h5v5h-5ZM765 178h5v5h-5ZM779 178h5v5h-5ZM883 171h5v5h-5ZM890 178h5v5h-5ZM750 241h6v6h-6ZM768 241h7v7h-7ZM793 404h10v13h-10ZM818 169h5v6h-5Z'

let leaders = ''
for (const x of [718, ...allX, 1561]) {
  for (const y of beamY) {
    leaders += `M${x - 5} ${y - 24}V${y - 3}L${x - 1} ${y + 6}`
    if (minorX.includes(x)) leaders += `M${x - 5} ${y - 3}l6 -3h23`
  }
}
for (const x of allX) leaders += `M${x - 19} 237l19 -10h24M${x - 19} 403l19 -8h24`
leaders += 'M821 266L815 282L819 298M1544 262L1552 307M1546 306L1553 348M770 159L774 175H798M881 159L885 175H909M716 266L713 284V300'

let stirrups = 'M738 236V253M742 236V253M746 236V253M754 236L764 254H784L794 236M780 236V253M802 236V253M806 236V253M810 236V253'
for (const x of allX.filter(n => n > 880)) {
  stirrups += `M${x - 27} 236L${x - 21} 236L${x - 12} 254H${x + 10}L${x + 18} 236H${x + 22}`
  for (const d of [-24, -20, -16, 16, 20, 24]) stirrups += `M${x + d} 236V253`
  stirrups += `M${x + 16} 252L${x + 24} 238M${x + 20} 253L${x + 28} 238`
}
let lowStirrups = 'M747 404V417M750 404V417M754 404V417M776 404V417M838 404V417M842 404V417M846 404V417M855 404H864L875 418H890L899 404M915 418L905 404M915 418H926L935 404H950'
for (const x of allX.filter(n => n > 880)) {
  for (const d of [-20, -17, -14, 14, 17, 20]) lowStirrups += `M${x + d} 404V417`
}
lowStirrups += 'M1500 404L1512 417H1530L1537 404M1543 404L1553 418H1570L1580 404H1589'

const ellipses = [
  [747, 209], [798, 209], [903, 209], [944, 204], [989, 184], [1034, 184], [1079, 184], [761, 266], [795, 266], [798, 307], [798, 348], [798, 390],
  [747, 434], [798, 434], [747, 473], [798, 473], [747, 161], [805, 171], [849, 161], [747, 514], [792, 514], [1123, 184], [1168, 184], [1217, 184],
  [1257, 184], [1302, 184], [1347, 184], [1391, 184], [1436, 184], [1488, 184], [1536, 198], [1577, 198], [1577, 265], [1589, 307], [1581, 348],
  [1577, 390], [1571, 438], [1581, 473], [1577, 514]
]

const tinyText = []
allX.forEach((x, i) => {
  tinyText.push({ x: x + 10, y: 190, r: -90, v: 'KC22' })
  tinyText.push({ x: x + 2, y: 225, r: 0, v: i % 2 ? '2C14:6' : '2C12:6' })
  tinyText.push({ x: x - 4, y: 273, r: -90, v: '2C22' })
  tinyText.push({ x: x + 9, y: 438 + (i % 3) * 4, r: -90, v: '2C25/4C22' })
  for (const y of beamY) {
    tinyText.push({ x: x - 8, y: y - 1, r: -90, v: 'C:6' })
    tinyText.push({ x: x + 1, y: y - 7, r: 0, v: 'C:6' })
  }
})
for (const y of beamY) {
  tinyText.push({ x: 800, y: y - 5, r: 0, v: '4C22' }, { x: 831, y: y - 5, r: 0, v: 'KC22 4/2' }, { x: 1583, y: y - 5, r: 0, v: '4C22' })
  tinyText.push({ x: 787, y: y + 9, r: 0, v: '2C22' }, { x: 785, y: y + 15, r: 0, v: 'C8@100(2)' })
}
for (const y of [220, 268, 340, 440, 485]) {
  tinyText.push({ x: 714, y, r: -90, v: '4C25/3C16' }, { x: 834, y: y + 10, r: -90, v: '6C25 2/4' }, { x: 728, y, r: -90, v: '2C22' })
}
tinyText.push({ x: 725, y: 345, r: -90, v: 'KL25(1)4C22' }, { x: 732, y: 345, r: -90, v: 'C8@100(2)' }, { x: 844, y: 203, r: -90, v: 'C8@100' }, { x: 826, y: 214, r: 0, v: '550' }, { x: 856, y: 214, r: 0, v: '2700' })

const notes = []
function addNote(x, y, c) {
  for (const [i, v] of ['L19(8)', '250x700', 'C8@100', '2C22', 'G4C12'].entries()) notes.push({ x, y: y + i * 6, c, v })
}
addNote(1111, 192, '#f0f')
addNote(1111, 378, '#f0f')
addNote(733, 264, '#0f0')
for (const y of [260, 298, 338, 462]) addNote(1111, y, '#0f0')
addNote(1156, 462, '#0f0')
</script>

<style>
body {
  background: #f0f0f0;
}
</style>

<style scoped>
.app {
  height: 100vh;
  display: flex;
  flex-direction: column;
  overflow: hidden;
  background: #f0f0f0;
  color: #333;
  font: 12px/16px "Open Sans", "Noto Sans CJK SC", sans-serif;
}

.app * {
  box-sizing: border-box;
}

button,
input,
select {
  font: inherit;
  color: inherit;
}

button {
  padding: 0;
  border: 0;
  background: none;
  white-space: nowrap;
}

svg {
  flex: none;
}

.tri {
  flex: none;
  border: 3px solid transparent;
  border-top: 4px solid #666;
  border-bottom: 0;
}

.bar {
  background: #c8c8c8;
  border-radius: 4px;
}

/* TOP */
.top {
  flex: none;
  height: 34px;
  display: flex;
  background: #fff;
  border-bottom: 1px solid #eee;
  position: relative;
}

.logo {
  width: 34px;
  height: 26px;
}

.top-main {
  flex: 1;
  min-width: 0;
  padding-left: 12px;
}

.title-row {
  height: 15px;
  display: flex;
  align-items: center;
}

.quick {
  width: 457px;
  display: flex;
  align-items: center;
  gap: 4px;
  flex: none;
  height: 14px;
}

.quick-btn {
  width: 23px;
  height: 22px;
  display: flex;
  align-items: center;
  justify-content: center;
  margin-top: -8px;
}

.quick-btn.caret {
  width: 8px;
}

.quick-btn.active {
  background: #c2daf2;
}

.quick-btn svg {
  width: 16px;
  height: 16px;
}

.app-title {
  margin-top: -7px;
  flex: 1;
  white-space: nowrap;
}

.win svg {
  width: 50px;
  height: 12px;
  margin-top: -4px;
}

.menu {
  display: flex;
  align-items: center;
  height: 19px;
}

.corner {
  position: absolute;
  left: 35px;
  top: 24px;
  border: 2px solid #666;
  border-top-color: transparent;
  border-left-color: transparent;
}

.menu button {
  height: 19px;
  padding: 0 13px;
}

.menu button.on {
  background: #1890ff;
  border-radius: 9px;
  color: #fff;
}

.help {
  position: absolute;
  right: 0;
  top: 6px;
  height: 34px;
  display: flex;
  align-items: center;
  z-index: 2;
}

.tip {
  position: relative;
  width: 196px;
  height: 34px;
  padding: 0 14px 0 7px;
  display: flex;
  align-items: center;
  justify-content: space-between;
  background: #098eff;
  border-radius: 3px;
  color: #fff;
  margin-right: 10px;
}

.tip::after {
  content: "";
  position: absolute;
  right: -5px;
  top: 12px;
  border: 5px solid transparent;
  border-left-color: #098eff;
  border-right: 0;
}

.tip button {
  height: 17px;
  padding: 0 3px;
  background: #3ca6ff;
  border-radius: 2px;
}

.ask {
  display: flex;
  align-items: center;
  width: 320px;
  height: 17px;
  border: 1px solid #ddd;
  border-radius: 2px;
  background: #fff;
}

.ask input {
  flex: 1;
  min-width: 0;
  padding: 0;
  border: 0;
  outline: 0;
  height: 15px;
  color: #000;
}

.ask svg {
  width: 13px;
  height: 13px;
  margin-right: 5px;
}

.avatar {
  width: 16px;
  height: 16px;
  margin-left: 6px;
}

.chat {
  width: 16px;
  height: 16px;
  margin-left: 17px;
}

.question {
  display: flex;
  align-items: center;
  font-size: 16px;
  margin: 0 9px 0 7px;
}

/* RIBBON */
.ribbon {
  flex: none;
  height: 99px;
  display: flex;
  background: #fff;
  border-bottom: 1px solid #d0d0d0;
}

.group {
  margin: 2px 0 4px;
  padding: 3px 7px 0 6px;
  border-right: 1px solid #d9d9d9;
  display: flex;
  flex-direction: column;
}

.group.pick {
  width: 229px;
  padding-left: 4px;
}

.group:last-child {
  padding-right: 16px;
}

.group-body {
  display: flex;
  gap: 2px;
}

.group-name {
  margin-top: 7px;
  text-align: center;
}

.big {
  height: 67px;
  padding: 0 4px;
  display: flex;
  flex-direction: column;
  align-items: center;
  border-radius: 2px;
}

.big svg {
  width: 32px;
  height: 32px;
  margin-bottom: 5px;
}

.big.active {
  background: #c2daf2;
}

.smalls {
  display: flex;
  flex-direction: column;
  gap: 7px;
  padding: 2px 0 0 3px;
}

.smalls.second {
  margin-left: 4px;
}

.smalls button {
  display: flex;
  align-items: center;
  gap: 2px;
}

.smalls svg {
  width: 16px;
  height: 16px;
}

.smalls .tri {
  margin-left: 4px;
}

/* SELECTORS */
.selectors {
  flex: none;
  height: 26px;
  padding-top: 1px;
  display: flex;
  gap: 3px;
}

.select-box {
  position: relative;
  width: 99px;
  height: 23px;
}

.select-box:first-child {
  width: 97px;
}

.select-box select {
  width: 100%;
  height: 23px;
  padding: 0 2px;
  appearance: none;
  border: 1px solid #d5d5d5;
  border-radius: 3px;
  background: #fff;
}

.select-box .tri {
  position: absolute;
  right: 5px;
  top: 10px;
}

/* PANELS */
.body {
  flex: 1;
  min-height: 0;
  display: flex;
}

.strip {
  flex: none;
  height: 12px;
  background: #e6e6e6;
  border-top: 1px solid #d5d5d5;
  border-bottom: 1px solid #d5d5d5;
  display: flex;
  justify-content: flex-end;
}

.strip button {
  width: 14px;
  line-height: 9px;
  font-size: 14px;
  color: #888;
}

.head {
  flex: none;
  margin: 0;
  height: 22px;
  padding-left: 5px;
  font-size: 12px;
  font-weight: 400;
  line-height: 22px;
  color: #777;
  background: #f1f1f1;
  border-bottom: 1px solid #d5d5d5;
}

.nav {
  width: 130px;
  flex: none;
  display: flex;
  flex-direction: column;
  background: #fff;
  border-right: 1px solid #d5d5d5;
}

.nav-tools {
  flex: none;
  height: 28px;
  padding-top: 2px;
  display: flex;
  gap: 4px;
  border-bottom: 1px solid #ccc;
}

.nav-tools button {
  width: 24px;
  height: 22px;
  padding-top: 1px;
  margin-top: 1px;
  border-radius: 3px;
  line-height: 0;
}

.nav-tools button:first-child {
  width: 22px;
}

.nav-tools .on {
  background: #c2daf2;
}

.nav-tools svg {
  width: 16px;
  height: 16px;
}

.nav-scroll {
  flex: 1;
  min-height: 0;
  padding-top: 4px;
  display: flex;
  overflow: hidden;
}

.nav-list {
  width: 115px;
  display: flex;
  flex-direction: column;
  gap: 3px;
  overflow: hidden;
}

.nav-item,
.nav-cat {
  flex: none;
  height: 25px;
  display: flex;
  align-items: center;
  overflow: hidden;
}

.nav-item {
  padding-left: 14px;
  gap: 14px;
}

.nav-item svg {
  width: 18px;
  height: 18px;
}

.nav-item.on {
  background: #d3e7fd;
}

.nav-cat {
  background: #ececec;
}

.dot {
  position: relative;
}

.dot::after {
  content: "";
  position: absolute;
  right: -6px;
  top: -3px;
  width: 6px;
  height: 6px;
  border-radius: 50%;
  background: #f00;
}

.lock {
  width: 12px;
  height: 12px;
}

.nav-cat em {
  margin-left: 2px;
  padding: 0 0 0 5px;
  line-height: 19px;
  font-style: normal;
  color: #6b3a00;
  background: linear-gradient(90deg, #f4d19a, #edbd68);
  border-radius: 9px 0 0 9px;
}

.nav-bar {
  width: 8px;
  height: 613px;
  margin: 81px 0 0 3px;
}

.lists {
  width: 445px;
  margin-left: 4px;
  flex: none;
  display: flex;
  flex-direction: column;
  gap: 4px;
}

.panel {
  display: flex;
  flex-direction: column;
  border: 1px solid #d5d5d5;
  border-top: 0;
  background: #fff;
}

.components {
  flex: 0 0 425px;
}

.props {
  flex: 1;
  min-height: 0;
  overflow: hidden;
}

.tabs {
  flex: none;
  height: 23px;
  background: #f1f1f1;
  border-bottom: 1px solid #ccc;
  display: flex;
}

.tabs button {
  width: 65px;
  border: 1px solid #bbb;
  border-width: 1px 1px 0 0;
  background: #e0e0e0;
  color: #777;
}

.tabs .on {
  background: #f1f1f1;
  color: #222;
  font-weight: 600;
}

.tools {
  flex: none;
  height: 28px;
  padding-left: 4px;
  display: flex;
  align-items: center;
  gap: 12px;
  border-bottom: 1px solid #ddd;
}

.tools button {
  display: flex;
  align-items: center;
  gap: 5px;
}

.tools svg,
.rebar-tools svg {
  width: 15px;
  height: 15px;
}

.tools .more {
  margin-left: auto;
  width: 12px;
  height: 18px;
  gap: 0;
  justify-content: center;
  border: 1px solid #ddd;
  border-radius: 3px;
}

.more i {
  border: 3px solid transparent;
  border-left: 4px solid #505a6b;
  border-right: 0;
}

.search {
  flex: none;
  height: 19px;
  display: flex;
  align-items: center;
  border-bottom: 1px solid #ddd;
}

.search input {
  flex: 1;
  padding: 0 2px;
  height: 18px;
  border: 0;
  outline: 0;
}

.search input::placeholder {
  color: #888;
}

.search svg {
  width: 13px;
  height: 13px;
  margin-right: 6px;
}

.comp-scroll {
  flex: 1;
  min-height: 0;
  display: flex;
  justify-content: space-between;
  overflow: hidden;
}

ul {
  list-style: none;
  margin: 0;
  padding: 2px 0 0 60px;
}

li {
  height: 24px;
  display: flex;
  align-items: center;
}

li span {
  width: 120px;
  padding: 0 3px;
  line-height: 21px;
  border-radius: 2px;
  white-space: pre;
}

li.on span {
  background: #c2daf2;
}

li.parent {
  margin-left: -27px;
  gap: 1px;
}

.comp-bar {
  width: 8px;
  height: 55px;
  margin: 75px 3px 0 0;
}

.props-scroll {
  display: flex;
  justify-content: space-between;
}

table {
  table-layout: fixed;
  border-collapse: collapse;
}

th {
  font-weight: 400;
}

.hot {
  background: #80bbfa;
  color: #fff;
  font-weight: 600;
}

.props table {
  width: 427px;
}

.c-no {
  width: 22px;
}

.c-name {
  width: 100px;
}

.props th,
.props td {
  height: 21px;
  padding: 0 3px;
  border: 1px solid #dadada;
  border-left: 0;
  line-height: 18px;
  white-space: nowrap;
  overflow: hidden;
}

.props .no {
  background: #f0f0f0;
  text-align: center;
  padding: 0;
  border-color: #c8c8c8;
}

.props .name {
  color: #1450f0;
}

.props .plain {
  color: #333;
}

.props .faint {
  color: #8c8c8c;
}

.props .cur .no {
  background: #80bbfa;
  color: #fff;
  font-weight: 600;
}

.props .cur .val {
  padding: 0;
}

.cur input {
  display: block;
  width: 100%;
  height: 20px;
  padding: 0 2px;
  border: 2px solid #7b7b7b;
  outline: 0;
}

.rebar {
  width: 11px;
  height: 11px;
}

.props .rebar {
  margin-bottom: 1px;
}

.props-bar {
  width: 8px;
  height: 165px;
  margin: 72px 3px 0 0;
}

/* SPLITTERS */
.split {
  width: 4px;
  flex: none;
  background: #f8f8f8;
}

.split i {
  display: block;
  height: 100px;
  margin-top: 130px;
  background: #5f6a79;
}

.hsplit {
  flex: none;
  height: 4px;
  background: #f8f8f8;
}

.hsplit i {
  display: block;
  width: 100px;
  height: 4px;
  margin: 0 auto;
  background: #5f6a79;
}

/* CANVAS */
.center {
  flex: 1;
  min-width: 0;
  display: flex;
  flex-direction: column;
}

.canvas {
  position: relative;
  flex: none;
  height: 359px;
  overflow: hidden;
  background: #000;
}

.cad {
  display: block;
  width: 100%;
  height: 359px;
}

.cad text {
  font-family: "Liberation Sans", sans-serif;
}

.cad .cad-dim {
  font-size: 18px;
  fill: #fff;
}

.cad .cad-axis {
  font-size: 18px;
  fill: #fff;
  text-anchor: middle;
}

.cad .cad-sub {
  font-size: 14px;
  fill: #0ff;
  text-anchor: middle;
}

.cad .tiny {
  font-size: 6px;
  font-weight: 700;
  fill: #fff;
}

.cad .note {
  font-size: 6px;
  font-weight: 700;
}

.cad .mark {
  font-size: 5px;
  font-weight: 700;
  fill: #0c0ce6;
  text-anchor: middle;
}

.cad .ucs {
  font-size: 16px;
  text-anchor: middle;
}

.hint {
  position: absolute;
  left: 0;
  right: 0;
  bottom: 0;
  height: 27px;
  display: flex;
  align-items: center;
  justify-content: center;
  gap: 4px;
  background: rgba(60, 60, 60, 0.72);
  color: #fff;
}

.hint svg {
  width: 16px;
  height: 16px;
}

.view-tools {
  position: absolute;
  top: 1px;
  right: 0;
  width: 32px;
  height: 244px;
  padding-top: 12px;
  display: flex;
  flex-direction: column;
  align-items: center;
  gap: 9px;
  background: #fff;
  border-radius: 3px;
}

.view-tools button {
  line-height: 0;
}

.view-tools svg {
  width: 20px;
  height: 20px;
}

.view-tools .tri {
  margin: -2px 0 -1px;
}

.view-tools hr {
  width: 23px;
  margin: -3px 0;
  border: 0;
  border-top: 1px solid #505a6b;
}

/* REBAR TABLE */
.rebar-panel {
  flex: 1;
  min-height: 0;
}

.rebar-panel .head {
  padding-left: 8px;
}

.rebar-tools {
  flex: none;
  height: 28px;
  padding: 2px 0 0 3px;
  display: flex;
  align-items: center;
  gap: 12px;
  border-bottom: 1px solid #ccc;
}

.rebar-tools button {
  display: flex;
  align-items: center;
  gap: 5px;
}

.rebar-tools .step {
  width: 19px;
  justify-content: center;
}

.grid-area {
  flex: 1;
  min-height: 0;
  display: flex;
}

.grid-scroll {
  flex: 1;
  min-width: 0;
  overflow: hidden;
}

.grid-scroll table {
  width: calc(100% + 16px);
}

.grid-scroll th {
  height: 20px;
  padding: 2px 0 0;
  border: 1px solid #d8d8d8;
  border-top: 0;
  line-height: 17px;
  white-space: nowrap;
  overflow: hidden;
}

.grid-scroll td {
  height: 46px;
  padding: 0 2px 2px;
  border: 1px solid #d9d4d4;
  background: #c1dee0;
  color: #000;
  font-family: "Liberation Serif", "Noto Sans CJK SC", serif;
  line-height: 14px;
  white-space: nowrap;
  overflow: hidden;
}

.grid-scroll td.no {
  padding: 0;
  text-align: center;
  background: #f0f0f0;
  color: #444;
  font-family: "Open Sans", sans-serif;
}

.grid-scroll .grade {
  padding-left: 4px;
}

.grid-scroll .figure {
  padding: 0;
}

.figure svg {
  display: block;
  width: 100%;
  height: 45px;
}

.figure text {
  font-size: 14px;
  text-anchor: middle;
}

.figure .red {
  fill: #f00;
}

.bar-line {
  fill: none;
  stroke: #000;
  stroke-width: 2;
}

.grid-bar {
  width: 14px;
  flex: none;
}

.grid-bar .bar {
  width: 6px;
  height: 55px;
  margin: 35px 0 0 3px;
}

.h-bar {
  flex: none;
  height: 9px;
  padding: 0 20px 0 5px;
  display: flex;
  align-items: center;
}

.h-bar .bar {
  width: 736px;
  height: 6px;
  margin: 2px auto 0 73px;
}

.h-bar i {
  border: 4px solid transparent;
}

.h-bar .left {
  border-right-color: #505a6b;
  border-left: 0;
}

.h-bar .right {
  border-left-color: #505a6b;
  border-right: 0;
}

/* DISPLAY SETTINGS */
.display {
  width: 235px;
  flex: none;
  display: flex;
  flex-direction: column;
  background: #fff;
  border-left: 1px solid #c3c5ca;
  overflow: hidden;
}

.display .head {
  padding-left: 8px;
}

.d-tabs {
  flex: none;
  height: 27px;
  padding: 4px 0 0 2px;
  display: flex;
  gap: 3px;
  border-bottom: 1px solid #c3c5ca;
}

.d-tabs button {
  width: 61px;
  height: 22px;
  background: #dedede;
  border-radius: 3px 3px 0 0;
}

.d-tabs .on {
  height: 23px;
  background: #fff;
  border: 1px solid #c3c5ca;
  border-bottom: 0;
  color: #1a73e8;
}

.radios {
  flex: none;
  height: 30px;
  padding-left: 7px;
  display: flex;
  align-items: center;
  gap: 22px;
  border-bottom: 1px solid #c3c5ca;
  color: #111;
}

.radios label {
  flex: none;
  display: flex;
  align-items: center;
  gap: 7px;
}

.radios input {
  width: 14px;
  height: 14px;
  margin: 0;
  appearance: none;
  border: 1px solid #777;
  border-radius: 50%;
}

.radios input:checked {
  border-color: #1a73e8;
  background: radial-gradient(#1a73e8 3px, #fff 4px);
}

.tree {
  flex: 1;
  min-height: 0;
  padding: 3px 0 0 45px;
  color: #777;
}

.tree label {
  height: 24px;
  display: flex;
  align-items: center;
  gap: 7px;
}

.tree .root {
  margin-left: -35px;
}

.tree .root .tri {
  margin-right: 1px;
}

.display input[type="checkbox"] {
  position: relative;
  width: 14px;
  height: 14px;
  margin: 0;
  appearance: none;
  border: 1px solid #aaa;
  border-radius: 2px;
  background: #fff;
}

.tree input:checked::after {
  content: "";
  position: absolute;
  left: 4px;
  top: 0;
  width: 4px;
  height: 9px;
  border: solid #999;
  border-width: 0 1px 1px 0;
  transform: rotate(40deg);
}

.tree .mixed::after {
  content: "";
  position: absolute;
  inset: 2px;
  border: 1px solid #bbb;
}

.foot {
  flex: none;
  height: 34px;
  padding: 5px 0 0 1px;
  display: flex;
  align-items: center;
  gap: 2px;
  border-top: 1px solid #c3c5ca;
}
</style>
